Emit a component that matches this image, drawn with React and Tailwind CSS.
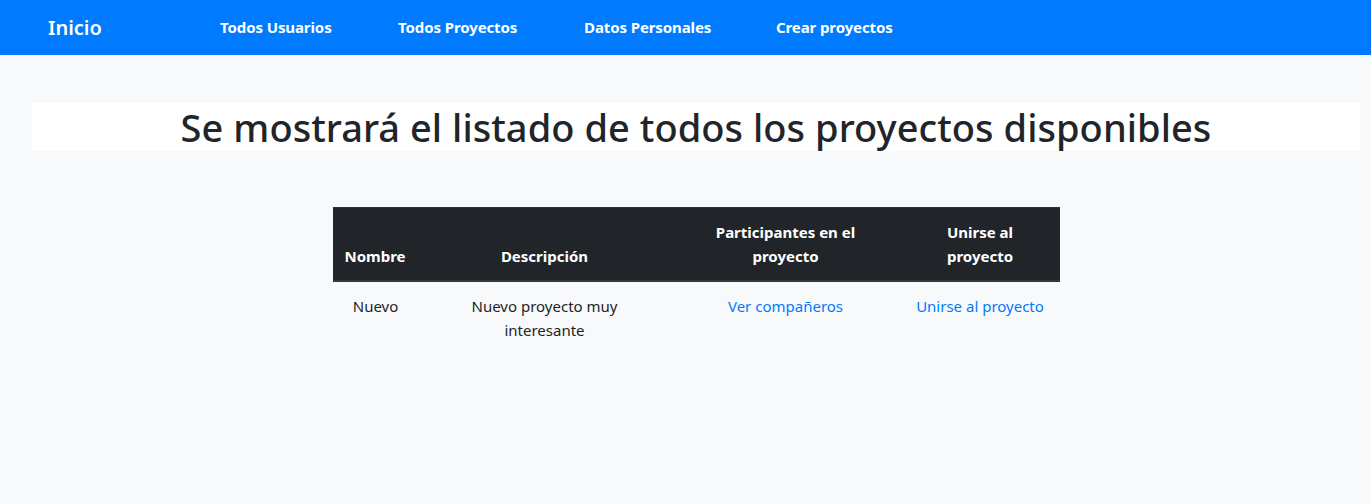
export default function App() {
  return (
    <div className="min-h-[504px] bg-[#f8f9fa] text-[#212529] font-['Noto_Sans',sans-serif]">
      <nav className="h-[55px] bg-[#007bff] flex items-center text-white">
        <div className="ml-[48px] w-[172px] text-[20px] font-semibold leading-[30px]">Inicio</div>
        <div className="w-[178px] text-[15px] font-bold tracking-[-0.1px]">Todos Usuarios</div>
        <div className="w-[186px] text-[15px] font-bold tracking-[-0.1px]">Todos Proyectos</div>
        <div className="w-[192px] text-[15px] font-bold tracking-[-0.1px]">Datos Personales</div>
        <div className="text-[15px] font-bold tracking-[-0.1px]">Crear proyectos</div>
      </nav>
      <div className="ml-[32px] mr-[11px] pt-[48px]">
        <div className="bg-white h-[48px] flex items-center justify-center">
          <h1 className="text-[38px] font-medium leading-[48px] tracking-[0.05px]">Se mostrará el listado de todos los proyectos disponibles</h1>
        </div>
        <table className="mx-auto mt-[56px] w-[727px] text-center text-[15px] leading-[24px] border-collapse">
          <thead>
            <tr className="bg-[#212529] text-white align-bottom">
              <th className="w-[86px] p-[12px] font-bold border-t border-t-[#2c3136] border-b-2 border-b-[#32383e] text-left">Nombre</th>
              <th className="w-[252px] p-[12px] font-bold border-t border-t-[#2c3136] border-b-2 border-b-[#32383e]">Descripción</th>
              <th className="w-[230px] p-[12px] font-bold border-t border-t-[#2c3136] border-b-2 border-b-[#32383e]">Participantes en el proyecto</th>
              <th className="w-[159px] p-[12px] font-bold border-t border-t-[#2c3136] border-b-2 border-b-[#32383e]">Unirse al proyecto</th>
            </tr>
          </thead>
          <tbody>
            <tr className="align-top">
              <td className="p-[12px]">Nuevo</td>
              <td className="px-[40px] py-[12px]">Nuevo proyecto muy interesante</td>
              <td className="p-[12px]"><a className="text-[#007bff]" href="#">Ver compañeros</a></td>
              <td className="p-[12px]"><a className="text-[#007bff]" href="#">Unirse al proyecto</a></td>
            </tr>
          </tbody>
        </table>
      </div>
    </div>
  );
}
